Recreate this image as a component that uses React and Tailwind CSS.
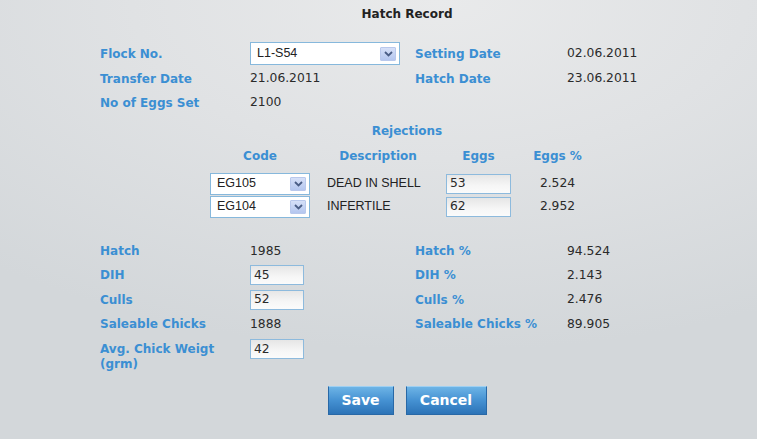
import React from "react";

const font = "font-['DejaVu_Sans',Verdana,sans-serif]";
const label = `${font} font-bold text-[12px] text-[#3b8fd3]`;
const value = `${font} text-[12.3px] text-[#2a2a2a]`;
const arial = "font-['Liberation_Sans',Arial,sans-serif]";

function Arrow() {
  return (
    <span className="flex h-[14px] w-[16px] items-center justify-center rounded-[1px] bg-[linear-gradient(to_bottom,#d6e0f8,#b4c6ef)] border border-[#b9c8ec]">
      <svg width="9" height="6" viewBox="0 0 9 6">
        <path d="M1 1 L4.5 4.5 L8 1" fill="none" stroke="#4a5d86" strokeWidth="1.8" />
      </svg>
    </span>
  );
}

function Select({ text, w, h }) {
  return (
    <div
      className={`flex items-center justify-between border border-[#86b8dc] bg-white pl-[6px] pr-[3px] ${arial} text-[12.5px] text-[#222] ${w} ${h}`}
    >
      <span>{text}</span>
      <Arrow />
    </div>
  );
}

function Input({ text, w }) {
  return (
    <div
      className={`flex h-[20px] items-center border border-[#8dbadd] bg-[linear-gradient(to_bottom,#e6e6e6,#f6f6f6_60%,#fbfbfb)] pl-[3px] ${font} text-[12.3px] text-[#2a2a2a] ${w}`}
    >
      {text}
    </div>
  );
}

function Btn({ children, w }) {
  return (
    <button
      className={`h-[29px] ${w} border border-[#2868a6] border-t-[#9fd0f2] bg-[linear-gradient(to_bottom,#6db4e6,#4591d2_50%,#2c73b7)] ${font} text-[14px] font-bold text-white`}
    >
      {children}
    </button>
  );
}

export default function App() {
  return (
    <div className="relative h-[439px] w-[757px] overflow-hidden bg-[radial-gradient(ellipse_90%_80%_at_58%_0%,#e9eaeb_0%,#e0e2e4_45%,#d3d7da_100%)]">
      {/* Title */}
      <div className="ml-[210px] flex h-[27px] w-[394px] items-center justify-center">
        <span className={`${font} text-[12px] font-bold text-[#222]`}>Hatch Record</span>
      </div>

      {/* Top section */}
      <div className="mt-[14px] pl-[100px]">
        <div className="grid grid-cols-[150px_165px_152px_auto]">
          <div className={`flex h-[25px] items-center ${label}`}>Flock No.</div>
          <div className="flex h-[25px] items-center">
            <Select text="L1-S54" w="w-[150px]" h="h-[23px]" />
          </div>
          <div className={`flex h-[25px] items-center ${label}`}>Setting Date</div>
          <div className={`flex h-[25px] items-center ${value}`}>02.06.2011</div>

          <div className={`flex h-[25px] items-center ${label}`}>Transfer Date</div>
          <div className={`flex h-[25px] items-center ${value}`}>21.06.2011</div>
          <div className={`flex h-[25px] items-center ${label}`}>Hatch Date</div>
          <div className={`flex h-[25px] items-center ${value}`}>23.06.2011</div>

          <div className={`flex h-[23px] items-center ${label}`}>No of Eggs Set</div>
          <div className={`flex h-[23px] items-center ${value}`}>2100</div>
          <div />
          <div />
        </div>
      </div>

      {/* Rejections */}
      <div className="ml-[210px] w-[394px]">
        <div className={`mt-[5px] flex h-[24px] items-center justify-center ${label}`}>Rejections</div>
        <div className="grid grid-cols-[100px_136px_65px_93px]">
          <div className={`flex h-[26px] items-center justify-center ${label}`}>Code</div>
          <div className={`flex h-[26px] items-center justify-center ${label}`}>Description</div>
          <div className={`flex h-[26px] items-center justify-center ${label}`}>Eggs</div>
          <div className={`flex h-[26px] items-center justify-center ${label}`}>Eggs %</div>

          <div className="mt-[3px] flex h-[23px] items-center">
            <Select text="EG105" w="w-[100px]" h="h-[22px]" />
          </div>
          <div className={`mt-[3px] flex h-[23px] items-center pl-[17px] ${arial} text-[12.5px] text-[#222]`}>
            DEAD IN SHELL
          </div>
          <div className="mt-[3px] flex h-[23px] items-center">
            <Input text="53" w="w-[65px]" />
          </div>
          <div className={`mt-[3px] flex h-[23px] items-center justify-center ${value}`}>2.524</div>

          <div className="flex h-[23px] items-center">
            <Select text="EG104" w="w-[100px]" h="h-[22px]" />
          </div>
          <div className={`flex h-[23px] items-center pl-[17px] ${arial} text-[12.5px] text-[#222]`}>
            INFERTILE
          </div>
          <div className="flex h-[23px] items-center">
            <Input text="62" w="w-[65px]" />
          </div>
          <div className={`flex h-[23px] items-center justify-center ${value}`}>2.952</div>
        </div>
      </div>

      {/* Bottom section */}
      <div className="mt-[21px] pl-[100px]">
        <div className="grid grid-cols-[150px_165px_152px_auto]">
          <div className={`flex h-[24px] items-center ${label}`}>Hatch</div>
          <div className={`flex h-[24px] items-center ${value}`}>1985</div>
          <div className={`flex h-[24px] items-center ${label}`}>Hatch %</div>
          <div className={`flex h-[24px] items-center ${value}`}>94.524</div>

          <div className={`flex h-[24px] items-center ${label}`}>DIH</div>
          <div className="flex h-[24px] items-center">
            <Input text="45" w="w-[54px]" />
          </div>
          <div className={`flex h-[24px] items-center ${label}`}>DIH %</div>
          <div className={`flex h-[24px] items-center ${value}`}>2.143</div>

          <div className={`flex h-[25px] items-center ${label}`}>Culls</div>
          <div className="flex h-[25px] items-center">
            <Input text="52" w="w-[54px]" />
          </div>
          <div className={`flex h-[25px] items-center ${label}`}>Culls %</div>
          <div className={`flex h-[25px] items-center ${value}`}>2.476</div>

          <div className={`flex h-[24px] items-center ${label}`}>Saleable Chicks</div>
          <div className={`flex h-[24px] items-center ${value}`}>1888</div>
          <div className={`flex h-[24px] items-center ${label}`}>Saleable Chicks %</div>
          <div className={`flex h-[24px] items-center ${value}`}>89.905</div>

          <div className={`pt-[6px] leading-[15px] ${label}`}>
            Avg. Chick Weigt
            <br />
            (grm)
          </div>
          <div className="pt-[3px]">
            <Input text="42" w="w-[54px]" />
          </div>
          <div />
          <div />
        </div>
      </div>

      {/* Buttons */}
      <div className="ml-[210px] mt-[14px] flex w-[394px] justify-center gap-[12px]">
        <Btn w="w-[66px]">Save</Btn>
        <Btn w="w-[81px]">Cancel</Btn>
      </div>
    </div>
  );
}
